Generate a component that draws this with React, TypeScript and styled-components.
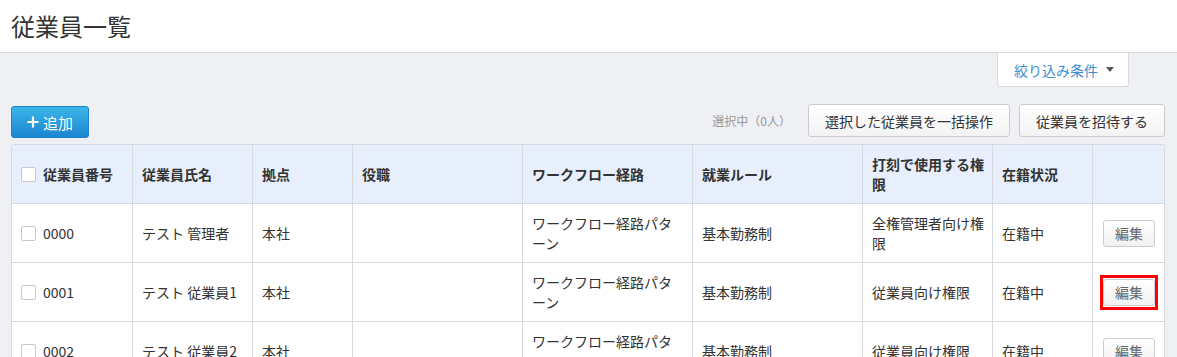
import styled, { createGlobalStyle } from "styled-components";

const GlobalStyle = createGlobalStyle`
  html, body {
    margin: 0;
    padding: 0;
    background: #eef0f4;
    font-family: "Noto Sans CJK JP", "Noto Sans", sans-serif;
    color: #333;
  }
  * { box-sizing: border-box; }
`;

type Row = {
  no: string;
  name: string;
  base: string;
  post: string;
  flow: string;
  rule: string;
  auth: string;
  status: string;
  highlight?: boolean;
};

const rows: Row[] = [
  { no: "0000", name: "テスト 管理者", base: "本社", post: "", flow: "ワークフロー経路パターン", rule: "基本勤務制", auth: "全権管理者向け権限", status: "在籍中" },
  { no: "0001", name: "テスト 従業員1", base: "本社", post: "", flow: "ワークフロー経路パターン", rule: "基本勤務制", auth: "従業員向け権限", status: "在籍中", highlight: true },
  { no: "0002", name: "テスト 従業員2", base: "本社", post: "", flow: "ワークフロー経路パターン", rule: "基本勤務制", auth: "従業員向け権限", status: "在籍中" },
];

const columns = [
  { label: "従業員番号", width: 121 },
  { label: "従業員氏名", width: 120 },
  { label: "拠点", width: 100 },
  { label: "役職", width: 170 },
  { label: "ワークフロー経路", width: 170 },
  { label: "就業ルール", width: 170 },
  { label: "打刻で使用する権限", width: 130 },
  { label: "在籍状況", width: 100 },
  { label: "", width: 71 },
];

export default function App() {
  return (
    <>
      <GlobalStyle />
      <Header>
        <Title>従業員一覧</Title>
      </Header>
      <Main>
        <FilterRow>
          <FilterTab>
            絞り込み条件
            <Caret />
          </FilterTab>
        </FilterRow>

        <Toolbar>
          <AddButton>
            <svg width="12" height="12" viewBox="0 0 12 12">
              <path d="M6 0.5v11M0.5 6h11" stroke="#fff" strokeWidth="2.2" />
            </svg>
            追加
          </AddButton>
          <ToolbarRight>
            <SelectedCount>選択中（0人）</SelectedCount>
            <GrayButton>選択した従業員を一括操作</GrayButton>
            <GrayButton>従業員を招待する</GrayButton>
          </ToolbarRight>
        </Toolbar>

        <TableBox>
          <Table>
            <colgroup>
              {columns.map((c, i) => (
                <col key={i} style={{ width: c.width }} />
              ))}
            </colgroup>
            <thead>
              <tr>
                {columns.map((c, i) => (
                  <Th key={i}>
                    {i === 0 ? (
                      <CheckCell>
                        <Checkbox />
                        {c.label}
                      </CheckCell>
                    ) : (
                      c.label
                    )}
                  </Th>
                ))}
              </tr>
            </thead>
            <tbody>
              {rows.map((r) => (
                <tr key={r.no}>
                  <Td>
                    <CheckCell>
                      <Checkbox />
                      {r.no}
                    </CheckCell>
                  </Td>
                  <Td>{r.name}</Td>
                  <Td>{r.base}</Td>
                  <Td>{r.post}</Td>
                  <Td>{r.flow}</Td>
                  <Td>{r.rule}</Td>
                  <Td>{r.auth}</Td>
                  <Td>{r.status}</Td>
                  <Td>
                    <EditFrame $highlight={r.highlight}>
                      <EditButton>編集</EditButton>
                    </EditFrame>
                  </Td>
                </tr>
              ))}
            </tbody>
          </Table>
        </TableBox>
      </Main>
    </>
  );
}

const Header = styled.header`
  height: 53px;
  background: #fff;
  border-bottom: 1px solid #d6d9de;
  display: flex;
  align-items: center;
  padding: 0 11px;
`;

const Title = styled.h1`
  margin: 0 0 1px;
  font-size: 24px;
  font-weight: 400;
  color: #333;
  line-height: 1;
`;

const Main = styled.main`
  padding: 0 12px 0 11px;
`;

const FilterRow = styled.div`
  display: flex;
  justify-content: flex-end;
  padding-right: 36px;
`;

const FilterTab = styled.div`
  display: flex;
  align-items: center;
  height: 34px;
  width: 132px;
  padding: 0 0 0 16px;
  background: #fff;
  border: 1px solid #d6d9de;
  border-top: none;
  border-radius: 0 0 3px 3px;
  color: #3b8ed5;
  font-size: 14px;
`;

const Caret = styled.span`
  margin-left: 8px;
  width: 0;
  height: 0;
  border-left: 4px solid transparent;
  border-right: 4px solid transparent;
  border-top: 5px solid #555;
`;

const Toolbar = styled.div`
  display: flex;
  justify-content: space-between;
  align-items: flex-start;
  margin-top: 17px;
  height: 40px;
`;

const AddButton = styled.button`
  display: flex;
  align-items: center;
  justify-content: center;
  gap: 4px;
  margin-top: 2px;
  width: 78px;
  height: 32px;
  border: 1px solid #1b82cf;
  border-radius: 3px;
  background: linear-gradient(#3bb6e8, #1d85d3);
  color: #fff;
  font-family: inherit;
  font-size: 15px;
  padding: 0;
`;

const ToolbarRight = styled.div`
  display: flex;
  align-items: center;
  gap: 9px;
`;

const SelectedCount = styled.span`
  font-size: 12px;
  color: #999;
  margin-right: 8px;
`;

const GrayButton = styled.button`
  height: 33px;
  padding: 0 16px;
  border: 1px solid #ccc;
  border-radius: 3px;
  background: linear-gradient(#fff, #f3f3f3);
  color: #333;
  font-family: inherit;
  font-size: 14px;
`;

const TableBox = styled.div`
  border: 1px solid #d6d9de;
  border-bottom: none;
  border-radius: 4px 4px 0 0;
  overflow: hidden;
  background: #fff;
`;

const Table = styled.table`
  width: 1152px;
  table-layout: fixed;
  border-collapse: separate;
  border-spacing: 0;
  font-size: 14px;
  line-height: 20px;
`;

const Th = styled.th`
  height: 59px;
  padding: 0 7px 0 9px;
  background: #e6effb;
  text-align: left;
  font-weight: 700;
  color: #333;
  border-right: 1px solid #d6d9de;
  border-bottom: 1px solid #d6d9de;
  vertical-align: middle;
  &:last-child { border-right: none; }
`;

const Td = styled.td`
  height: 59px;
  padding: 0 7px 0 9px;
  color: #333;
  border-right: 1px solid #d6d9de;
  border-bottom: 1px solid #d6d9de;
  vertical-align: middle;
  &:last-child { border-right: none; }
`;

const CheckCell = styled.div`
  display: flex;
  align-items: center;
  gap: 7px;
`;

const Checkbox = styled.span`
  flex: none;
  width: 15px;
  height: 15px;
  background: #fff;
  border: 1px solid #c8c8c8;
  border-radius: 2px;
`;

const EditFrame = styled.span<{ $highlight?: boolean }>`
  display: inline-block;
  margin-left: -2px;
  padding: 1px 0;
  border: 3px solid ${({ $highlight }) => ($highlight ? "#f00" : "transparent")};
  vertical-align: middle;
`;

const EditButton = styled.button`
  display: block;
  width: 52px;
  height: 27px;
  padding: 0;
  border: 1px solid #ccc;
  border-radius: 3px;
  background: linear-gradient(#fff, #f1f1f1);
  color: #666;
  font-family: inherit;
  font-size: 14px;
`;
